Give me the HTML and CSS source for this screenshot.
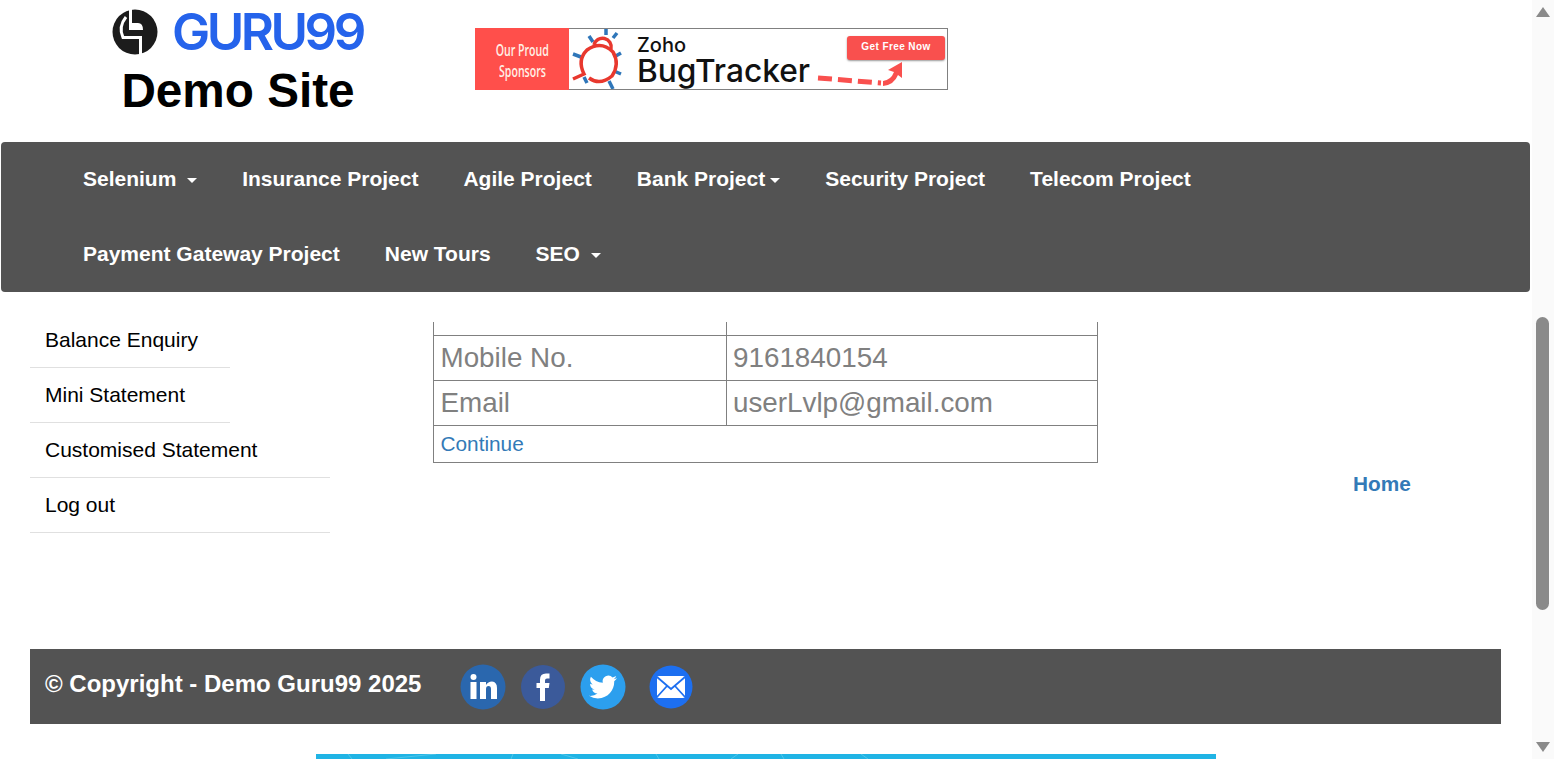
FILE: index.html
```html
<!DOCTYPE html>
<html lang="en">
<head>
    <meta charset="UTF-8">
    <title>Guru99 Demo Site</title>
    <link rel="stylesheet" href="styles.css">
</head>
<body>
<div class="page">
    <div class="content">
        <header class="top">
            <div class="brand">
                <div class="logo">
                    <svg class="logo-mark" width="46" height="46" viewBox="0 0 46 46">
                        <circle cx="23" cy="23" r="22.5" fill="#1c1c1c"/>
                        <path d="M17 0H20V14H26Q31 14 31 21H17Z" fill="#fff"/>
                        <path d="M14 8Q6 18 11 28.500H28.500V46" fill="none" stroke="#fff" stroke-width="3"/>
                    </svg>
                    <span class="logo-name">GURU99</span>
                </div>
                <h1 class="site-title">Demo Site</h1>
            </div>
            <a class="banner" href="#">
                <div class="banner-side">
                    <span>Our Proud</span>
                    <span>Sponsors</span>
                </div>
                <div class="banner-main">
                    <svg class="bug" width="66" height="60" viewBox="0 0 66 60">
                        <g fill="none" stroke="#2f76b9" stroke-width="3.500">
                            <path d="M37 0V6M48 4L44 9M20 7L24 13M4 25L12 28M52 24L45 28M52 45L45 42M18 54L15 48M44 60L40 52"/>
                        </g>
                        <g fill="none" stroke="#e8382e" stroke-width="3.500">
                            <path d="M25 16A8 8 0 1 1 42 20"/>
                            <path d="M4 50L15 45Q8 31 18 21Q32 11 44 23Q51 35 43 47Q31 57 20 49"/>
                        </g>
                    </svg>
                    <div class="zoho">
                        <span class="zoho-small">Zoho</span>
                        <span class="zoho-big">BugTracker</span>
                    </div>
                    <div class="cta">
                        <span class="cta-btn">Get Free Now</span>
                        <svg class="cta-arrow" width="86" height="30" viewBox="0 0 86 30">
                            <path d="M1 21L64 26" fill="none" stroke="#f9504e" stroke-width="5" stroke-dasharray="14 6"/>
                            <path d="M66 24Q74 23 77 15L71 13L85 5L85 21L81 18Q77 28 66 29Z" fill="#f9504e"/>
                        </svg>
                    </div>
                </div>
            </a>
        </header>

        <nav class="navbar">
            <a class="nav-link" href="#">Selenium <i class="caret"></i></a>
            <a class="nav-link" href="#">Insurance Project</a>
            <a class="nav-link" href="#">Agile Project</a>
            <a class="nav-link" href="#">Bank Project<i class="caret"></i></a>
            <a class="nav-link" href="#">Security Project</a>
            <a class="nav-link" href="#">Telecom Project</a>
            <a class="nav-link" href="#">Payment Gateway Project</a>
            <a class="nav-link" href="#">New Tours</a>
            <a class="nav-link" href="#">SEO <i class="caret"></i></a>
        </nav>

        <div class="body-row">
            <ul class="side-menu">
                <li class="short"><a href="#">Balance Enquiry</a></li>
                <li class="short"><a href="#">Mini Statement</a></li>
                <li><a href="#">Customised Statement</a></li>
                <li><a href="#">Log out</a></li>
            </ul>
            <div class="main">
                <table class="details">
                    <tr class="cut-row"><td></td><td></td></tr>
                    <tr><td>Mobile No.</td><td>9161840154</td></tr>
                    <tr><td>Email</td><td>userLvlp@gmail.com</td></tr>
                    <tr><td class="link-cell" colspan="2"><a href="#">Continue</a></td></tr>
                </table>
                <a class="home-link" href="#">Home</a>
            </div>
        </div>

        <footer class="footer">
            <span class="copy">© Copyright - Demo Guru99 2025</span>
            <div class="social">
                <svg width="46" height="46" viewBox="0 0 46 46">
                    <circle cx="23" cy="23" r="22.500" fill="#2a67ae"/>
                    <circle cx="13.500" cy="13" r="3" fill="#fff"/>
                    <rect x="10.500" y="18" width="6" height="17" fill="#fff"/>
                    <path d="M20 18H26V21Q28 17.500 32 17.500Q37 18 37 24V35H31V25Q31 22 28.500 22Q26 22 26 25V35H20Z" fill="#fff"/>
                </svg>
                <svg width="46" height="46" viewBox="0 0 46 46">
                    <circle cx="23" cy="23" r="22" fill="#3b5a9a"/>
                    <path d="M20 37V24H16.500V19H20V15.500Q20 9.500 26 9.500H29.500V14.500H27Q25 14.500 25 16.500V19H29.500L28.800 24H25V37Z" fill="#fff"/>
                </svg>
                <svg width="46" height="46" viewBox="0 0 46 46">
                    <circle cx="23" cy="23" r="22.500" fill="#2c9fee"/>
                    <g transform="translate(9 9) scale(1.170)">
                        <path d="M23.953 4.570a10 10 0 01-2.825.775 4.958 4.958 0 002.163-2.723c-.951.555-2.005.959-3.127 1.184a4.920 4.920 0 00-8.384 4.482C7.690 8.095 4.067 6.130 1.640 3.162a4.822 4.822 0 00-.666 2.475c0 1.710.870 3.213 2.188 4.096a4.904 4.904 0 01-2.228-.616v.060a4.923 4.923 0 003.946 4.827 4.996 4.996 0 01-2.212.085 4.936 4.936 0 004.604 3.417 9.867 9.867 0 01-6.102 2.105c-.390 0-.779-.023-1.170-.067a13.995 13.995 0 007.557 2.209c9.053 0 13.998-7.496 13.998-13.985 0-.210 0-.420-.015-.630A9.935 9.935 0 0024 4.590z" fill="#fff"/>
                    </g>
                </svg>
                <svg class="mail" width="44" height="44" viewBox="0 0 44 44">
                    <circle cx="22" cy="22" r="21.500" fill="#1d6ff0"/>
                    <rect x="8" y="11" width="28" height="22" rx="2" fill="#fff"/>
                    <path d="M8 12L22 24L36 12M8 32L18 21M36 32L26 21" fill="none" stroke="#1d6ff0" stroke-width="1.800"/>
                </svg>
            </div>
        </footer>

        <div class="ad-strip">
            <svg width="900" height="5" viewBox="0 0 900 5">
                <path d="M32 0L36 5M70 5L120 0M195 5L197 0M245 0L262 5M340 0L343 5M415 5L422 0M465 0L468 5M545 0L552 5" fill="none" stroke="#4ec5ea" stroke-width="1"/>
            </svg>
        </div>
    </div>

    <div class="scrollbar">
        <i class="arrow-up"></i>
        <div class="thumb"></div>
        <i class="arrow-down"></i>
    </div>
</div>
</body>
</html>
```

FILE: styles.css
```css
html, body {
    margin: 0;
    height: 759px;
    overflow: hidden;
    background-color: #fff;
    font-family: "Liberation Sans", Arial, sans-serif;
}
a {
    text-decoration: none;
}

.page {
    display: flex;
    height: 759px;
}
.content {
    width: 1532px;
    flex: none;
}

/* header */
.top {
    display: flex;
    height: 142px;
}
.brand {
    width: 475px;
    flex: none;
}
.logo {
    display: flex;
    align-items: center;
    gap: 14px;
    height: 46px;
    margin: 9px 0 0 112px;
}
.logo-name {
    font-family: Inter, sans-serif;
    font-size: 51px;
    font-weight: 600;
    line-height: 46px;
    letter-spacing: -3.500px;
    color: #2563eb;
}
.site-title {
    margin: 9px 0 0;
    width: 476px;
    text-align: center;
    font-size: 47.700px;
    line-height: 54px;
    font-weight: bold;
    color: #000;
}

/* sponsor banner */
.banner {
    display: flex;
    width: 473px;
    height: 62px;
    margin-top: 28px;
    box-sizing: border-box;
    border: 1px solid #808080;
    border-left: none;
}
.banner-side {
    display: flex;
    flex-direction: column;
    align-items: center;
    justify-content: center;
    gap: 5px;
    width: 94px;
    flex: none;
    margin: -1px 0;
    padding-top: 2px;
    box-sizing: border-box;
    background-color: #ff4f4b;
    color: #ffefe6;
    font-family: "Open Sans", sans-serif;
    font-size: 16px;
    line-height: 16px;
    font-weight: 600;
}
.banner-side span {
    transform: scaleX(0.66);
    white-space: nowrap;
}
.banner-main {
    display: flex;
    flex: 1;
    overflow: hidden;
}
.bug {
    flex: none;
    margin: 0 2px 0 0;
}
.zoho {
    display: flex;
    flex-direction: column;
    width: 180px;
    flex: none;
    color: #111;
    font-family: Inter, sans-serif;
    font-weight: 500;
}
.zoho-small {
    font-size: 20px;
    line-height: 20px;
    margin-top: 6px;
}
.zoho-big {
    font-size: 31.700px;
    line-height: 32px;
    white-space: nowrap;
}
.cta {
    display: flex;
    flex-direction: column;
}
.cta-btn {
    display: block;
    width: 98px;
    height: 24px;
    margin: 7px 0 0 30px;
    border-radius: 3px;
    background-color: #f9504e;
    box-shadow: 0 1px 2px rgba(0, 0, 0, 0.4);
    color: #fff;
    font-size: 10px;
    font-weight: bold;
    line-height: 22px;
    letter-spacing: 0.4px;
    text-align: center;
}
.cta-arrow {
    margin-top: -3px;
}

/* nav */
.navbar {
    display: flex;
    flex-wrap: wrap;
    box-sizing: border-box;
    width: 1529px;
    height: 150px;
    margin-left: 1px;
    padding: 0 60px 0 59.500px;
    border-radius: 4px;
    background-color: #535353;
}
.nav-link {
    display: block;
    padding: 0 22.5px;
    height: 75px;
    line-height: 74px;
    color: #fff;
    font-size: 21px;
    font-weight: bold;
}
.caret {
    display: inline-block;
    vertical-align: middle;
    width: 0;
    height: 0;
    margin-left: 5px;
    border-top: 5px solid #fff;
    border-left: 5.500px solid transparent;
    border-right: 5.500px solid transparent;
}

/* page body */
.body-row {
    display: flex;
    height: 357px;
}
.side-menu {
    list-style: none;
    width: 300px;
    flex: none;
    margin: 21px 103px 0 30px;
    padding: 0;
}
.side-menu li {
    height: 55px;
    box-sizing: border-box;
    border-bottom: 1px solid #e0e0e0;
}
.side-menu li.short {
    width: 200px;
}
.side-menu a {
    display: block;
    padding-left: 15px;
    line-height: 54px;
    font-size: 21px;
    color: #000;
    white-space: nowrap;
}
.main {
    display: flex;
    padding-top: 30px;
}
.details {
    width: 665px;
    height: 141px;
    border-collapse: collapse;
    table-layout: fixed;
    color: #808080;
    font-size: 27.800px;
}
.details tr {
    height: 45px;
}
.details td {
    padding: 0 6px;
    border: 1px solid #808080;
}
.details td:first-child {
    width: 279px;
    padding: 0 6.500px;
}
.details .cut-row {
    height: 13px;
}
.details .cut-row td {
    border-top: none;
}
.details .link-cell {
    height: 36px;
    font-size: 20.800px;
}
.details tr:last-child {
    height: 37px;
}
.details a,
.home-link {
    color: #337ab7;
}
.home-link {
    margin: 148px 0 0 255px;
    font-size: 20.800px;
    line-height: 28px;
    font-weight: bold;
    height: 28px;
}

/* footer */
.footer {
    display: flex;
    align-items: center;
    height: 75px;
    width: 1471px;
    margin-left: 30px;
    padding-left: 15px;
    box-sizing: border-box;
    background-color: #535353;
}
.copy {
    color: #fff;
    font-size: 24px;
    font-weight: bold;
    margin-top: -5px;
}
.social {
    display: flex;
    align-items: center;
    gap: 14px;
    margin: 0 0 0 39px;
}
.social .mail {
    margin-left: 9px;
}
.ad-strip {
    width: 900px;
    height: 5px;
    margin: 30px 0 0 316px;
    background-color: #20b4e5;
    overflow: hidden;
}
.ad-strip svg {
    display: block;
}

/* drawn scrollbar, the reference page is scrolled */
.scrollbar {
    display: flex;
    flex-direction: column;
    align-items: center;
    width: 22px;
    flex: none;
    box-sizing: border-box;
    padding: 7px 1px 7px 0;
    background-color: #fafafa;
}
.arrow-up,
.arrow-down {
    width: 0;
    height: 0;
    border-left: 7px solid transparent;
    border-right: 7px solid transparent;
}
.arrow-up {
    border-bottom: 10px solid #8a8a8a;
}
.arrow-down {
    border-top: 10px solid #8a8a8a;
    margin-top: auto;
}
.thumb {
    width: 13px;
    height: 293px;
    margin-top: 300px;
    border-radius: 7px;
    background-color: #8a8a8a;
}
```
